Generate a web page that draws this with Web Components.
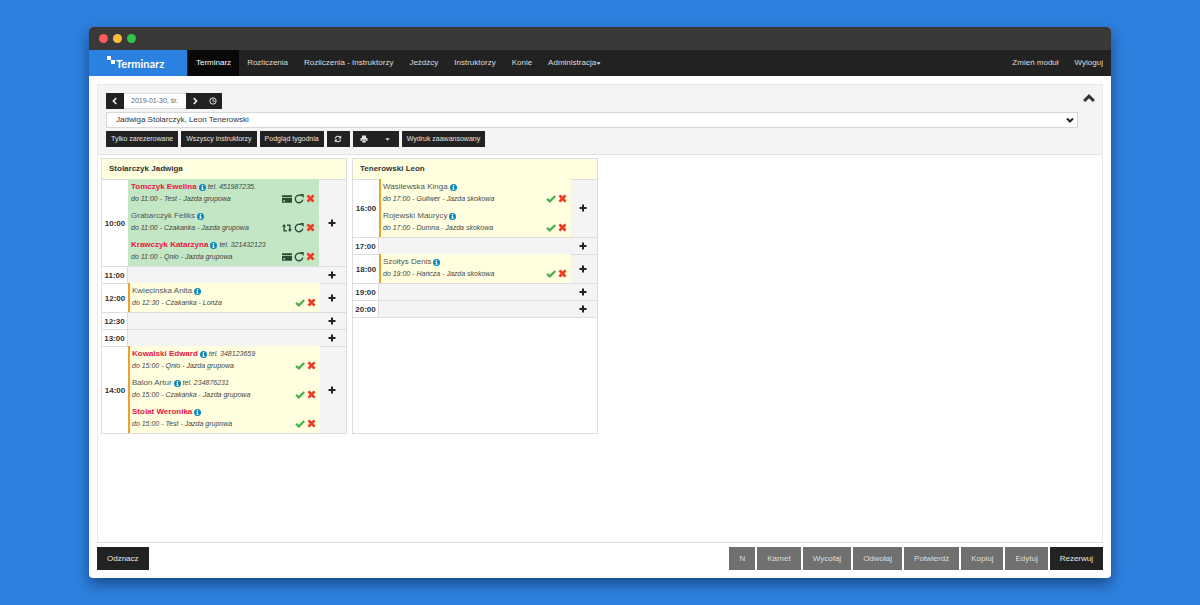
<!DOCTYPE html>
<html lang="pl">
<head>
<meta charset="utf-8">
<title>Terminarz</title>
<style>
html{height:100%}
body{margin:0;min-height:100%;box-sizing:border-box;padding:27px 89px;display:flex;background:#2e80de;color:#333;font:8px/12px "Liberation Sans",Arial,sans-serif}
</style>
</head>
<body>
<app-window>
  <nav-bar slot="nav">
    <nav-link active>Terminarz</nav-link>
    <nav-link>Rozliczenia</nav-link>
    <nav-link>Rozliczenia - Instruktorzy</nav-link>
    <nav-link>Jeźdźcy</nav-link>
    <nav-link>Instruktorzy</nav-link>
    <nav-link>Konie</nav-link>
    <nav-link caret>Administracja</nav-link>
    <nav-link slot="end">Zmień moduł</nav-link>
    <nav-link slot="end">Wyloguj</nav-link>
  </nav-bar>
  <tool-bar slot="tools"></tool-bar>
  <schedule-table name="Stolarczyk Jadwiga">
    <schedule-row time="10:00">
      <schedule-entry booked alert tel="tel. 451987235." actions="card,repeat,cross" detail="do 11:00 - Test - Jazda grupowa">Tomczyk Ewelina</schedule-entry>
      <schedule-entry booked actions="retweet,repeat,cross" detail="do 11:00 - Czakanka - Jazda grupowa">Grabarczyk Feliks</schedule-entry>
      <schedule-entry booked alert tel="tel. 321432123" actions="card,repeat,cross" detail="do 11:00 - Qnio - Jazda grupowa">Krawczyk Katarzyna</schedule-entry>
    </schedule-row>
    <schedule-row time="11:00"></schedule-row>
    <schedule-row time="12:00">
      <schedule-entry detail="do 12:30 - Czakanka - Lonża">Kwiecinska Anita</schedule-entry>
    </schedule-row>
    <schedule-row time="12:30"></schedule-row>
    <schedule-row time="13:00"></schedule-row>
    <schedule-row time="14:00">
      <schedule-entry alert tel="tel. 348123659" detail="do 15:00 - Qnio - Jazda grupowa">Kowalski Edward</schedule-entry>
      <schedule-entry tel="tel. 234876231" detail="do 15:00 - Czakanka - Jazda grupowa">Balon Artur</schedule-entry>
      <schedule-entry alert detail="do 15:00 - Test - Jazda grupowa">Stolat Weronika</schedule-entry>
    </schedule-row>
  </schedule-table>
  <schedule-table name="Tenerowski Leon">
    <schedule-row time="16:00">
      <schedule-entry detail="do 17:00 - Guliwer - Jazda skokowa">Wasilewska Kinga</schedule-entry>
      <schedule-entry detail="do 17:00 - Dumna - Jazda skokowa">Rojewski Maurycy</schedule-entry>
    </schedule-row>
    <schedule-row time="17:00"></schedule-row>
    <schedule-row time="18:00">
      <schedule-entry detail="do 19:00 - Hańcza - Jazda skokowa">Szołtys Denis</schedule-entry>
    </schedule-row>
    <schedule-row time="19:00"></schedule-row>
    <schedule-row time="20:00"></schedule-row>
  </schedule-table>
  <action-bar slot="footer"></action-bar>
</app-window>

<script>
const ICONS = {
  left: '<path d="M10.5 2 5 8l5.500 6" fill="none" stroke="currentColor" stroke-width="3.600"/>',
  right: '<path d="M5.500 2 11 8l-5.500 6" fill="none" stroke="currentColor" stroke-width="3.600"/>',
  down: '<path d="M2 5l6 6 6-6" fill="none" stroke="currentColor" stroke-width="4"/>',
  up: '<path d="M1.500 12l6.500-6.500 6.500 6.500" fill="none" stroke="currentColor" stroke-width="4"/>',
  clock: '<circle cx="8" cy="8" r="6.300" fill="none" stroke="currentColor" stroke-width="2"/><path d="M8 4v4.500h3.500" fill="none" stroke="currentColor" stroke-width="1.800"/>',
  refresh: '<path d="M2.500 7A5.600 5.600 0 0 1 12 4.200M13.500 9A5.600 5.600 0 0 1 4 11.800" fill="none" stroke="currentColor" stroke-width="2.200"/><path d="M14.500 1v6h-6zM1.500 15V9h6z"/>',
  print: '<path d="M4 1h8v5H4zM1 6h14v6h-2.500V9.500h-9V12H1zM4.500 10.500h7V15h-7z"/>',
  caret: '<path d="M1 4h14l-7 8z"/>',
  plus: '<path d="M6 1h4v5h5v4h-5v5H6v-5H1V6h5z"/>',
  check: '<path d="M.5 9 3 6.300l3 2.900L13.500 2 16 4.500 6.200 14.500z"/>',
  cross: '<path d="M1 4 4 1l4 3.600L12 1l3 3-3.600 4 3.600 4-3 3-4-3.600L4 15l-3-3 3.600-4z"/>',
  card: '<path d="M0 2h16v3H0zM0 6.500h16V14H0zM2 10v2h3v-2z" fill-rule="evenodd"/>',
  repeat: '<path d="M11.500 3A6 6 0 1 0 14 9" fill="none" stroke="currentColor" stroke-width="2.100"/><path d="M9.500 0h6v6.500z"/>',
  retweet: '<path d="M3.300 5v7.500H8M12.700 11V3.500H8" fill="none" stroke="currentColor" stroke-width="2.200"/><path d="M0 6l3.300-4.500L6.600 6zM9.400 10h6.600l-3.300 4.500z"/>',
  info: '<circle cx="8" cy="8" r="8"/><path d="M6.500 2.500h3v2.500h-3zM5.500 6.500h4v5h1.200v1.800H5.500v-1.800h1.200V8.300H5.500z" fill="#fff"/>'
};
const icon = (name, size = 8) => `<svg class="i ${name}" width="${size}" height="${size}" viewBox="0 0 16 16" fill="currentColor" aria-hidden="true">${ICONS[name]}</svg>`;
const BASE = `:host,*{box-sizing:border-box}svg{display:block;flex:none}
button{font:inherit;color:inherit;border:0;margin:0;padding:0;background:none;display:flex;align-items:center;justify-content:center;cursor:pointer;white-space:nowrap}`;
function define(name, css, html) {
  customElements.define(name, class extends HTMLElement {
    constructor() { super(); this.attachShadow({mode: 'open'}); }
    connectedCallback() {
      this.shadowRoot.innerHTML = `<style>${BASE}${css}</style>` + (typeof html === 'function' ? html(this) : html);
    }
  });
}

define('app-window', `
:host{display:flex;flex-direction:column;flex:1;min-width:0;background:#fff;border-radius:4px;overflow:hidden;box-shadow:0 6px 14px rgba(0,20,60,.5)}
.title{height:23px;background:#393939;display:flex;align-items:center;gap:5px;padding-left:10px}
.title i{width:9px;height:9px;border-radius:50%;background:#fc5b57}
.title i:nth-child(2){background:#fdbc40}.title i:nth-child(3){background:#2fc546}
main{flex:1;display:flex;flex-direction:column;margin:8px 8px 0;border:1px solid #eaeaea;border-bottom-color:#ddd}
.columns{display:grid;grid-template-columns:repeat(4,1fr);gap:5px;padding:3px 2px 0 3px}
footer{padding:4px 8px 8px}`,
`<header><div class="title"><i></i><i></i><i></i></div><slot name="nav"></slot></header>
<main><slot name="tools"></slot><div class="columns"><slot></slot></div></main>
<footer><slot name="footer"></slot></footer>`);

define('nav-bar', `
:host{display:block;background:#222;color:#ddd}
nav{display:flex;height:26px}
.logo{width:98px;background:#2b81df;color:#fff;font:bold 11px/28px Lato,sans-serif;text-decoration:none;display:flex;padding-left:18px;margin-right:1px}
.logo svg{margin-top:6px}
.end{display:flex;margin-left:auto}`,
`<nav><a class="logo" href="#"><svg width="9" height="9" viewBox="0 0 9 9" fill="#fff"><path d="M0 0h4v4H0zM4 4h4v4H4z"/></svg>Terminarz</a><slot></slot><div class="end"><slot name="end"></slot></div></nav>`);

define('nav-link', `
:host{display:flex}
:host([active]){background:#080808;color:#fff}
a{display:flex;align-items:center;padding:0 8px;color:inherit;text-decoration:none;white-space:nowrap}`,
el => `<a href="#"><slot></slot>${el.hasAttribute('caret') ? icon('caret', 5) : ''}</a>`);

define('tool-bar', `
:host{display:flex;flex-direction:column;gap:3px;background:#f4f4f4;border-bottom:1px solid #e4e4e4;padding:8px 24px 7px 8px;font-size:7px;position:relative}
.row{display:flex;height:16px}
.buttons{gap:3px}
button{background:#222;color:#e4e4e4;height:16px;padding:0 5px}
.sq{width:18px;padding:0}.wide{width:23px;padding:0}
.group{display:flex}
input{width:62px;border:1px solid #ddd;border-width:1px 0;padding:0 7px;font:inherit;color:#666;background:#fff}
.pick{display:grid;align-items:center}
.pick>*{grid-area:1/1}
select{appearance:none;width:100%;height:16px;border:1px solid #d8d8d8;border-radius:0;background:#fff;color:#333;padding:0 9px;font:inherit;font-size:8px}
.pick svg{justify-self:end;margin-right:4px;pointer-events:none;color:#222}
.fold{position:absolute;right:7px;top:5px;background:none;color:#333;padding:0}`,
`<div class="row"><button class="sq" aria-label="Poprzedni dzień">${icon('left')}</button><input type="text" aria-label="Data" value="2019-01-30, śr."><button class="sq" aria-label="Następny dzień">${icon('right')}</button><button class="sq" aria-label="Dzisiaj">${icon('clock')}</button></div>
<div class="row pick"><select aria-label="Instruktorzy"><option>Jadwiga Stolarczyk, Leon Tenerowski</option></select>${icon('down')}</div>
<div class="row buttons"><button>Tylko zarezerowane</button><button>Wszyscy instruktorzy</button><button>Podgląd tygodnia</button><button class="wide" aria-label="Odśwież">${icon('refresh')}</button><span class="group"><button class="wide" aria-label="Drukuj">${icon('print')}</button><button class="wide" aria-label="Więcej">${icon('caret', 5)}</button></span><button>Wydruk zaawansowany</button></div>
<button class="fold" aria-label="Zwiń">${icon('up', 12)}</button>`);

define('schedule-table', `
:host{display:block;border:1px solid #ddd;background:#fff;min-width:0}
h2{margin:0;height:20px;font:bold 8px/20px "Liberation Sans",Arial,sans-serif;padding-left:7px;background:#ffffe0}`,
el => `<h2>${el.getAttribute('name')}</h2><slot></slot>`);

define('schedule-row', `
:host{display:grid;grid-template-columns:26px 1fr 26px;min-height:17px;background:#f4f4f4;box-shadow:inset 0 1px #ddd}
:host(:last-of-type){box-shadow:inset 0 1px #ddd,0 1px #ddd}
time{display:flex;align-items:center;justify-content:center;font-weight:bold;background:#fff;border-right:1px solid #ddd;border-top:1px solid #ddd;padding-top:1px}
:host(:not(:empty)) time{border-right:0}
button{padding-right:2px;color:#222}`,
el => `<time>${el.getAttribute('time')}</time><div><slot></slot></div><button aria-label="Dodaj ${el.getAttribute('time')}">${icon('plus')}</button>`);

define('schedule-entry', `
:host{display:block;height:29px;background:#ffffe0;border-left:2px solid #f0a030;padding:2px 4px 0 2px}
:host([booked]){background:#c3e6c5;border-left:0;padding-left:3px;margin-right:1px}
.name,.detail{display:flex;align-items:center;height:12px;white-space:nowrap}
.name{gap:2px;color:#555}
.detail{height:11px}
:host([alert]) b{color:#e8173f}
b{font-weight:normal}:host([alert]) b{font-weight:bold}
em{font-size:7px;color:#444}
.info{color:#0d86b8}
.acts{display:flex;align-items:center;gap:2px;margin-left:auto}
.acts .check{color:#4caf50}.acts .cross{color:#ee3b24}.acts{color:#2d4a35}`,
el => {
  const labels = {card: 'Karnet', repeat: 'Cofnij', retweet: 'Zamień', check: 'Potwierdź', cross: 'Usuń'};
  const acts = (el.getAttribute('actions') || 'check,cross').split(',');
  return `<div class="name"><b><slot></slot></b>${icon('info', 7)}<em>${el.getAttribute('tel') || ''}</em></div>
<div class="detail"><em>${el.getAttribute('detail')}</em><span class="acts">${acts.map(a => `<button aria-label="${labels[a]}">${icon(a, a === 'cross' ? 9 : 10)}</button>`).join('')}</span></div>`;
});

define('action-bar', `
:host{display:flex;gap:2px}
button{height:23px;padding:0 10px;background:#222;color:#e8e8e8}
button:disabled{background:#707070;color:#ddd}
.first{margin-right:auto}`,
`<button class="first">Odznacz</button>` + ['N', 'Karnet', 'Wycofaj', 'Odwołaj', 'Potwierdź', 'Kopiuj', 'Edytuj'].map(t => `<button disabled>${t}</button>`).join('') + `<button>Rezerwuj</button>`);
</script>
</body>
</html>
